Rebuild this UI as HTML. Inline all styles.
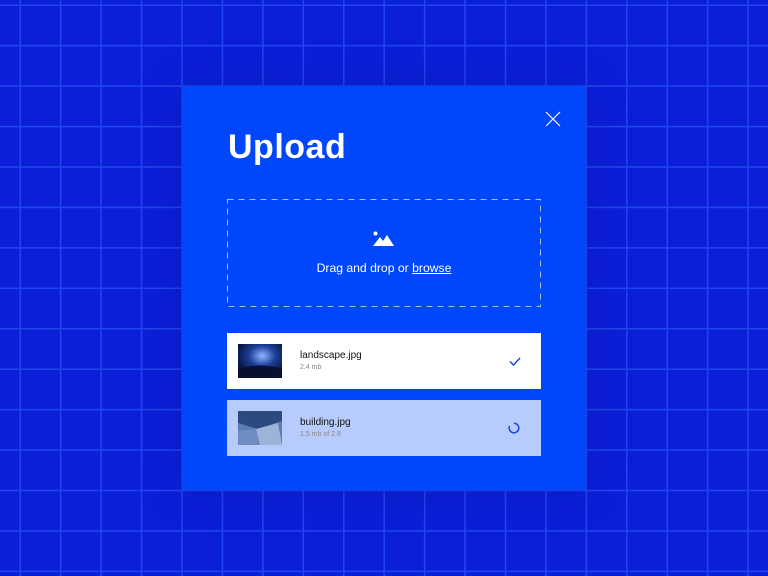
<!DOCTYPE html>
<html><head><style>
*{margin:0;padding:0;box-sizing:border-box}
body{width:768px;height:576px;overflow:hidden;background-color:#0b1fd9;
background-image:linear-gradient(to right,#2246ee 0,#2246ee 1.5px,transparent 1.5px),linear-gradient(to bottom,#2246ee 0,#2246ee 1.5px,transparent 1.5px);
background-size:40.45px 40.45px;background-position:19.5px 4.5px;font-family:"Liberation Sans",sans-serif;position:relative}
.modal{position:absolute;left:182px;top:86px;width:404px;height:404px;background:#0047fc;box-shadow:0 0 40px rgba(0,20,120,.25)}
.title{position:absolute;left:46px;top:42px;color:#fff;font-size:34px;font-weight:bold;letter-spacing:0.5px}
.close{position:absolute;left:363px;top:25px}
.drop{position:absolute;left:45px;top:113px;width:314px;height:108px}
.drop .txt{position:absolute;left:0;right:0;top:62px;text-align:center;color:#fff;font-size:12.2px}
.drop .txt u{text-decoration:underline}
.row{position:absolute;left:45px;width:314px;height:56px}
.thumb{position:absolute;left:11px;top:11px;width:44px;height:34px}
.name{position:absolute;left:73px;top:17px;font-size:10px;color:#111}
.size{position:absolute;left:73px;top:31px;font-size:7px;color:#888}
</style></head><body>
<div class="modal">
<div class="title">Upload</div>
<svg class="close" width="16" height="16" viewBox="0 0 16 16"><path d="M1 1L15 15M15 1L1 15" stroke="#fff" stroke-width="1.2"/></svg>
<div class="drop">
<svg style="position:absolute;left:0;top:0" width="314" height="108"><rect x="0.5" y="0.5" width="313" height="107" fill="none" stroke="#a9bdf8" stroke-width="1" stroke-dasharray="6 5"/></svg>
<svg style="position:absolute;left:146px;top:32px" width="22" height="16" viewBox="0 0 22 16"><circle cx="2.5" cy="2.5" r="2" fill="#fff"/><path d="M0 15L7 6L10 10L14 4L21 15Z" fill="#fff"/></svg>
<div class="txt">Drag and drop or <u>browse</u></div>
</div>
<div class="row" style="top:247px;background:#fff">
<svg class="thumb" viewBox="0 0 44 34"><defs><radialGradient id="g1" cx="0.55" cy="0.35" r="0.6"><stop offset="0" stop-color="#8fb6ff"/><stop offset="0.5" stop-color="#1d3f98"/><stop offset="1" stop-color="#06143d"/></radialGradient></defs><rect width="44" height="34" fill="url(#g1)"/><path d="M0 25Q22 18 44 25V34H0Z" fill="#071030"/></svg>
<div class="name">landscape.jpg</div><div class="size">2.4 mb</div>
<svg style="position:absolute;left:282px;top:24px" width="12" height="9" viewBox="0 0 12 9"><path d="M1 4.5L4.5 8L11 1" fill="none" stroke="#1c47d6" stroke-width="1.5"/></svg>
</div>
<div class="row" style="top:314px;background:#b8cbfd">
<svg class="thumb" viewBox="0 0 44 34"><rect width="44" height="34" fill="#5b7db6"/><path d="M0 0H44V10L20 18L0 12Z" fill="#2d4a80"/><path d="M18 18L40 12L44 34H22Z" fill="#9cb4d8"/><path d="M0 20L18 18L22 34H0Z" fill="#6f8dc0"/></svg>
<div class="name">building.jpg</div><div class="size">1.5 mb of 2.8</div>
<svg style="position:absolute;left:281px;top:22px" width="12" height="12" viewBox="0 0 12 12"><path d="M6 1.2A4.8 4.8 0 1 1 1.6 4" fill="none" stroke="#1c47d6" stroke-width="1.5"/></svg>
</div>
</div>
</body></html>
